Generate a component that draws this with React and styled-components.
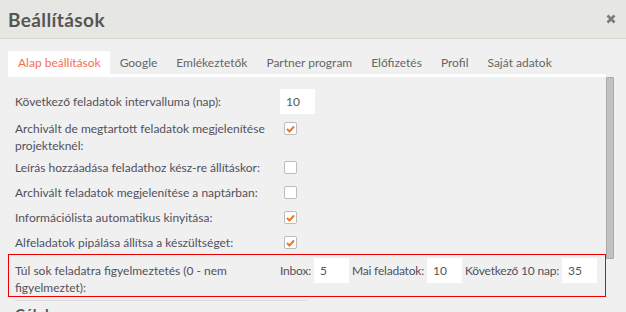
import React from "react";
import styled, { createGlobalStyle } from "styled-components";

const GlobalStyle = createGlobalStyle`
  html, body {
    margin: 0;
    padding: 0;
    background: #f0f0f0;
    overflow: hidden;
  }
  body {
    font-family: Lato, "Open Sans", sans-serif;
    font-size: 12px;
    color: #52505c;
  }
`;

const Dialog = styled.div`
  width: 626px;
  height: 312px;
  overflow: hidden;
  background: #f0f0f0;
`;

const Header = styled.div`
  height: 39px;
  display: flex;
  align-items: center;
  justify-content: space-between;
  padding: 0 10px 0 8px;
  background: #e6e6e2;
  border-bottom: 1px solid #d6d6d3;
  box-sizing: border-box;
`;

const Title = styled.h1`
  margin: 0;
  font-size: 19px;
  font-weight: 700;
  letter-spacing: 0.4px;
  color: #555;
`;

const Close = styled.div`
  width: 10px;
  height: 10px;
  display: flex;
  cursor: pointer;
`;

const Body = styled.div`
  padding: 12px 12px 0 8px;
`;

const Tabs = styled.div`
  display: flex;
  border-bottom: 3px solid #fff;
  width: 598px;
`;

const Tab = styled.div`
  height: 23px;
  display: flex;
  align-items: center;
  padding: 0 9px 0 10px;
  background: ${p => (p.$active ? "#fff" : "transparent")};
  color: ${p => (p.$active ? "#f36f55" : "#666")};
`;

const Content = styled.div`
  display: flex;
`;

const Settings = styled.div`
  width: 598px;
  padding-top: 12px;
`;

const Row = styled.div`
  display: grid;
  grid-template-columns: 265px 1fr;
  align-items: start;
  padding: 0 7px;
  height: ${p => p.$h}px;
  line-height: 17px;
`;

const Label = styled.div`
  padding-top: ${p => p.$pad}px;
`;

const Field = styled.div`
  display: flex;
  align-items: center;
  gap: 3px;
  white-space: nowrap;
  letter-spacing: -0.2px;
`;

const Input = styled.div`
  width: 35px;
  height: 25px;
  box-sizing: border-box;
  background: #fff;
  padding-left: 6px;
  display: flex;
  align-items: center;
  color: #555;
  letter-spacing: 0;
`;

const Check = styled.div`
  width: 13px;
  height: 13px;
  margin: 2px 0 0 4px;
  box-sizing: border-box;
  border: 1px solid #bcbcbc;
  border-radius: 2px;
  background: #fff;
  display: flex;
  align-items: center;
  justify-content: center;
`;

const Warn = styled(Row)`
  border: 1px solid #e00;
  padding: 3px 6px 0;
  height: 43px;
  box-sizing: border-box;
  margin-top: -5px;
`;

const Divider = styled.div`
  margin: 3px 0 0 7px;
  width: 292px;
  height: 1px;
  background: #dcdcdc;
`;

const Section = styled.div`
  margin: 4px 0 0 7px;
  font-size: 15px;
  font-weight: 700;
  color: #555;
`;

const Scrollbar = styled.div`
  width: 8px;
`;

const Thumb = styled.div`
  width: 8px;
  height: 182px;
  box-sizing: border-box;
  background: #c1c1c1;
  border: 1px solid #a9a9a9;
  border-radius: 1px;
`;

const Tick = () => (
  <svg width="9" height="8" viewBox="0 0 9 8">
    <path d="M1 4 L3.5 6.5 L8 1.5" fill="none" stroke="#f5731e" strokeWidth="2" />
  </svg>
);

const rows = [
  { label: "Következő feladatok intervalluma (nap):", value: "10", h: 31 },
  { label: "Archivált de megtartott feladatok megjelenítése projekteknél:", checked: true, h: 39 },
  { label: "Leírás hozzáadása feladathoz kész-re állításkor:", checked: false, h: 25 },
  { label: "Archivált feladatok megjelenítése a naptárban:", checked: false, h: 25 },
  { label: "Információlista automatikus kinyitása:", checked: true, h: 25 },
  { label: "Alfeladatok pipálása állítsa a készültséget:", checked: true, h: 25 },
];

const tabs = ["Alap beállítások", "Google", "Emlékeztetők", "Partner program", "Előfizetés", "Profil", "Saját adatok"];

export default function App() {
  return (
    <Dialog>
      <GlobalStyle />
      <Header>
        <Title>Beállítások</Title>
        <Close>
          <svg width="10" height="10" viewBox="0 0 10 10">
            <path d="M1.5 1.5 L8.5 8.5 M8.5 1.5 L1.5 8.5" stroke="#7b7b7b" strokeWidth="2.6" />
          </svg>
        </Close>
      </Header>
      <Body>
        <Tabs>
          {tabs.map((t, i) => (
            <Tab key={t} $active={i === 0}>{t}</Tab>
          ))}
        </Tabs>
        <Content>
          <Settings>
            {rows.map(r => (
              <Row key={r.label} $h={r.h}>
                <Label $pad={r.value ? 4 : 0}>{r.label}</Label>
                {r.value ? (
                  <Input>{r.value}</Input>
                ) : (
                  <Check>{r.checked && <Tick />}</Check>
                )}
              </Row>
            ))}
            <Warn $h={43}>
              <Label $pad={4}>Túl sok feladatra figyelmeztetés (0 - nem figyelmeztet):</Label>
              <Field>
                Inbox: <Input>5</Input>
                Mai feladatok: <Input>10</Input>
                Következő 10 nap: <Input>35</Input>
              </Field>
            </Warn>
            <Divider />
            <Section>Célok</Section>
          </Settings>
          <Scrollbar>
            <Thumb />
          </Scrollbar>
        </Content>
      </Body>
    </Dialog>
  );
}
